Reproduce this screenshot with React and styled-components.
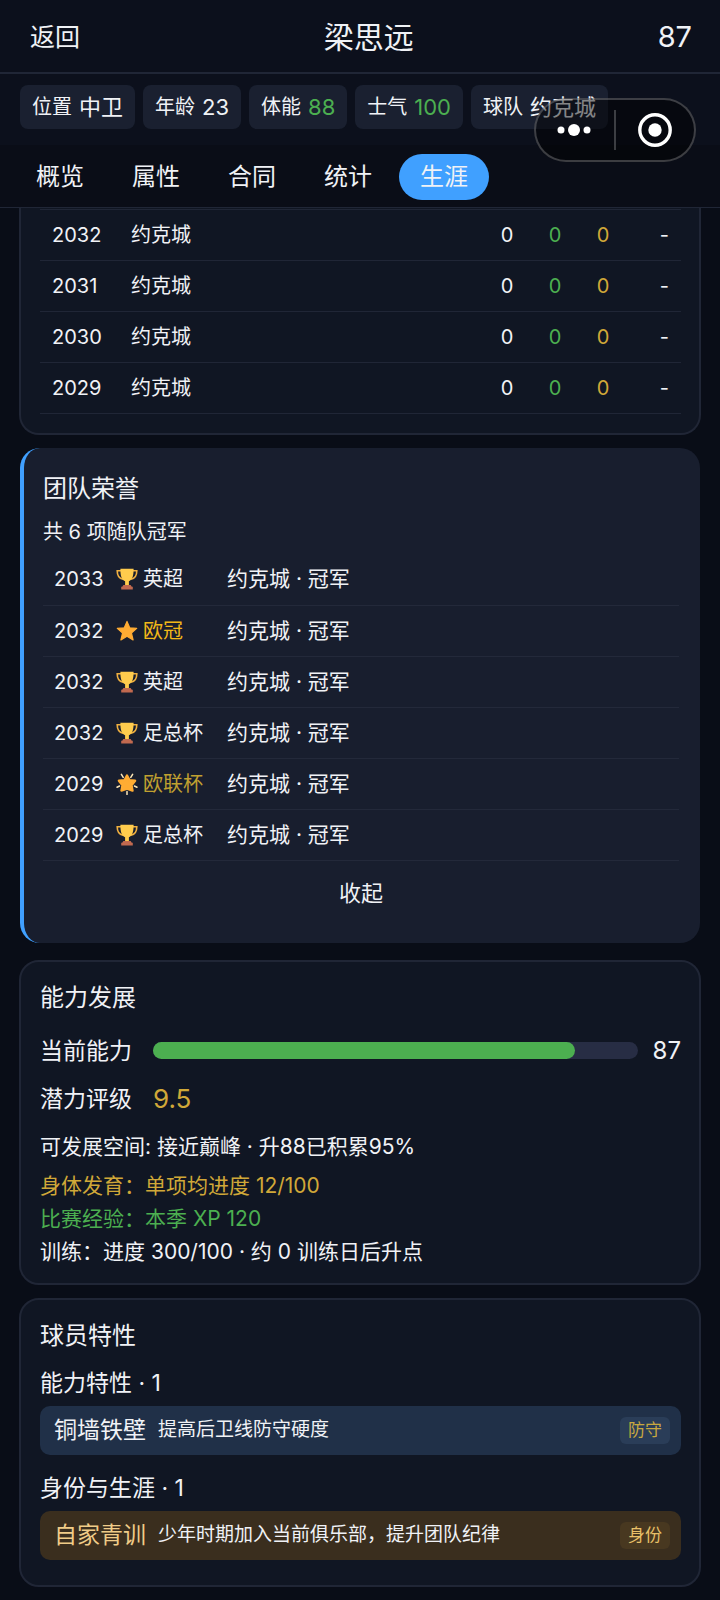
import React, { useState } from 'react';
import styled, { createGlobalStyle } from 'styled-components';

const colors = {
  page: '#090d17',
  header: '#0c101c',
  tabs: '#0a0d17',
  card: '#101623',
  honor: '#181e2e',
  chip: '#1a2030',
  line: '#202636',
  text: '#f0f2f6',
  blue: '#40a0ff',
  green: '#4caf50',
  gold: '#d0a838',
};

const chips = [
  { label: '位置', value: '中卫' },
  { label: '年龄', value: '23' },
  { label: '体能', value: '88', color: colors.green },
  { label: '士气', value: '100', color: colors.green },
  { label: '球队', value: '约克城' },
];

const tabs = ['概览', '属性', '合同', '统计', '生涯'];

const seasons = ['2032', '2031', '2030', '2029'];

const honors = [
  { year: '2033', icon: 'trophy', name: '英超' },
  { year: '2032', icon: 'star', name: '欧冠', color: '#f2b818' },
  { year: '2032', icon: 'trophy', name: '英超' },
  { year: '2032', icon: 'trophy', name: '足总杯' },
  { year: '2029', icon: 'glow', name: '欧联杯', color: '#c0a030' },
  { year: '2029', icon: 'trophy', name: '足总杯' },
];

const ability = 87;

export default function PlayerCareer () {
  const [tab, setTab] = useState('生涯');
  const [open, setOpen] = useState(true);

  return (
    <Page>
      <GlobalStyle/>
      <Header>
        <BackButton type="button">返回</BackButton>
        <PlayerName>梁思远</PlayerName>
        <Rating>{ability}</Rating>
      </Header>
      <Chips>
        {chips.map(c => (
          <Chip key={c.label}>
            {c.label} <ChipValue $color={c.color}>{c.value}</ChipValue>
          </Chip>
        ))}
      </Chips>
      <Tabs>
        {tabs.map(t => (
          <Tab key={t} type="button" $active={t === tab} onClick={() => setTab(t)}>{t}</Tab>
        ))}
      </Tabs>
      <Capsule>
        <CapsuleButton type="button" aria-label="更多">
          <svg width="36" height="14" viewBox="0 0 36 14" fill="#fff">
            <circle cx="4" cy="7" r="3.5"/>
            <circle cx="17" cy="7" r="6"/>
            <circle cx="30" cy="7" r="3.5"/>
          </svg>
        </CapsuleButton>
        <CapsuleDivider/>
        <CapsuleButton type="button" aria-label="关闭">
          <svg width="34" height="34" viewBox="0 0 34 34">
            <circle cx="17" cy="17" r="15.2" fill="none" stroke="#fff" strokeWidth="3.4"/>
            <circle cx="17" cy="17" r="6.7" fill="#fff"/>
          </svg>
        </CapsuleButton>
      </Capsule>

      <Body>
        <SeasonCard>
          <SeasonTable>
            <tbody>
              {seasons.map(year => (
                <tr key={year}>
                  <YearCell>{year}</YearCell>
                  <TeamCell>约克城</TeamCell>
                  <NumberCell>0</NumberCell>
                  <NumberCell $color={colors.green}>0</NumberCell>
                  <NumberCell $color={colors.gold}>0</NumberCell>
                  <ScoreCell>-</ScoreCell>
                </tr>
              ))}
            </tbody>
          </SeasonTable>
        </SeasonCard>

        <HonorCard>
          <Title>团队荣誉</Title>
          <Summary>共 6 项随队冠军</Summary>
          <HonorTable>
            <tbody>
              {(open ? honors : honors.slice(0, 3)).map((h, i) => (
                <tr key={i}>
                  <HonorYear>{h.year}</HonorYear>
                  <HonorName $color={h.color}>
                    <HonorLabel><HonorIcon type={h.icon}/>{h.name}</HonorLabel>
                  </HonorName>
                  <HonorDetail>约克城 · 冠军</HonorDetail>
                </tr>
              ))}
            </tbody>
          </HonorTable>
          <ToggleButton type="button" onClick={() => setOpen(!open)}>
            {open ? '收起' : '展开'}
          </ToggleButton>
        </HonorCard>

        <AbilityCard>
          <Title>能力发展</Title>
          <Stats>
            <StatRow>
              <StatLabel>当前能力</StatLabel>
              <Track><Fill style={{ width: `${ability}%` }}/></Track>
              <StatValue>{ability}</StatValue>
            </StatRow>
            <StatRow>
              <StatLabel>潜力评级</StatLabel>
              <Potential>9.5</Potential>
            </StatRow>
          </Stats>
          <Room>可发展空间: 接近巅峰 · 升88已积累95%</Room>
          <Note $color={colors.gold}>身体发育：单项均进度 12/100</Note>
          <Note $color={colors.green}>比赛经验：本季 XP 120</Note>
          <Note>训练：进度 300/100 · 约 0 训练日后升点</Note>
        </AbilityCard>

        <Card>
          <Title>球员特性</Title>
          <TraitGroup>
            <GroupTitle>能力特性 · 1</GroupTitle>
            <Trait>
              <TraitName>铜墙铁壁</TraitName>
              <TraitText>提高后卫线防守硬度</TraitText>
              <TraitTag>防守</TraitTag>
            </Trait>
          </TraitGroup>
          <TraitGroup>
            <GroupTitle>身份与生涯 · 1</GroupTitle>
            <Trait $gold>
              <TraitName $gold>自家青训</TraitName>
              <TraitText>少年时期加入当前俱乐部，提升团队纪律</TraitText>
              <TraitTag $gold>身份</TraitTag>
            </Trait>
          </TraitGroup>
        </Card>
      </Body>
    </Page>
  );
}

function HonorIcon ({ type }) {
  if (type === 'star') {
    return (
      <Icon viewBox="0 0 22 22">
        <path fill="#ffac33" stroke="#ffac33" strokeWidth="1.2" strokeLinejoin="round" d="M11 1.400l2.700 6.400 7 .6-5.300 4.600 1.700 6.900L11 16.200l-6.100 3.700 1.700-6.900-5.300-4.600 7-.6z"/>
      </Icon>
    );
  }
  if (type === 'glow') {
    return (
      <Icon viewBox="0 0 22 22">
        <path stroke="#ffe8b6" strokeWidth="1.5" strokeLinecap="round" d="M5.400 1.400l1.800 3M16.600 1.400l-1.800 3M1 14.200l2.600-1.200M21 14.200l-2.600-1.200M11 18.400v3"/>
        <path fill="#ffac33" stroke="#ffac33" strokeWidth="2.400" strokeLinejoin="round" d="M11 2.600l2.500 4.600 5.600.6-3.600 4.400 1 5.400L11 15.600l-5.500 2 1-5.400-3.600-4.400 5.600-.6z"/>
      </Icon>
    );
  }
  return (
    <Icon viewBox="0 0 22 22">
      <path fill="none" stroke="#f0b040" strokeWidth="1.6" d="M5.400 2.800H1.200c0 4.600 1 7.600 5.800 8.400M16.600 2.800h4.200c0 4.600-1 7.600-5.800 8.400"/>
      <path fill="#ffcc4d" d="M4.400.8h13.200c0 6.400-.8 10.800-4.700 12.400v4.200H9.100v-4.200C5.200 11.600 4.400 7.200 4.400.8z"/>
      <path fill="#c1694f" d="M7.400 17h7.200l1.200 1.800h1v2.800H5.200v-2.800h1z"/>
    </Icon>
  );
}

const GlobalStyle = createGlobalStyle`
  * {
    box-sizing: border-box;
  }
  body {
    margin: 0;
    background: ${colors.page};
  }
  body, button {
    font-family: Inter, "Noto Sans CJK SC", sans-serif;
    line-height: 32px;
    color: ${colors.text};
  }
  button {
    border: 0;
    padding: 0;
    background: none;
    cursor: pointer;
  }
`;

const Page = styled.div`
  position: relative;
  min-height: 100vh;
  font-size: 20px;
`;


/** HEADER **/

const Header = styled.header`
  display: flex;
  align-items: center;
  justify-content: space-between;
  height: 74px;
  padding: 2px 28px 0 30px;
  background: ${colors.header};
  border-bottom: 2px solid ${colors.line};
`;

const BackButton = styled.button`
  font-size: 25px;
`;

const PlayerName = styled.h1`
  margin: 0;
  font-size: 30px;
  font-weight: 400;
`;

const Rating = styled.span`
  font-size: 29px;
`;

const Chips = styled.div`
  display: flex;
  gap: 8px;
  padding: 11px 20px 16px;
  background: ${colors.header};
`;

const Chip = styled.span`
  display: flex;
  align-items: center;
  gap: 7px;
  height: 44px;
  padding: 0 12px;
  border-radius: 8px;
  background: ${colors.chip};
  white-space: nowrap;
`;

const ChipValue = styled.span`
  font-size: 22px;
  color: ${props => props.$color || colors.text};
`;

const Tabs = styled.nav`
  display: flex;
  gap: 6px;
  padding: 9px 15px 7px;
  background: ${colors.tabs};
  border-bottom: 1px solid ${colors.line};
`;

const Tab = styled.button`
  height: 46px;
  padding: 0 21px;
  border-radius: 23px;
  font-size: 24px;
  background: ${props => props.$active ? colors.blue : 'transparent'};
`;

const Capsule = styled.div`
  position: absolute;
  top: 98px;
  right: 24px;
  display: flex;
  align-items: center;
  width: 162px;
  height: 64px;
  border: 2px solid rgba(255, 255, 255, 0.22);
  border-radius: 32px;
  background: rgba(0, 0, 0, 0.45);
`;

const CapsuleButton = styled.button`
  flex: 1;
  display: flex;
  align-items: center;
  justify-content: center;
  height: 100%;
`;

const CapsuleDivider = styled.span`
  width: 2px;
  height: 40px;
  background: rgba(255, 255, 255, 0.22);
`;


/** CARDS **/

const Body = styled.main`
  padding: 0 19px 14px;
`;

const Card = styled.section`
  margin-bottom: 13px;
  padding: 19px 18px 25px 19px;
  background: ${colors.card};
  border: 2px solid ${colors.line};
  border-radius: 20px;
`;

const SeasonCard = styled(Card)`
  padding-top: 1px;
  padding-bottom: 19px;
  border-top: 0;
  border-radius: 0 0 20px 20px;
`;

const HonorCard = styled(Card)`
  margin: 0 1px 17px;
  padding: 24px 21px 26px 19px;
  background: ${colors.honor};
  border: 0;
  border-left: 4px solid ${colors.blue};
`;

const AbilityCard = styled(Card)`
  padding-bottom: 15px;
`;

const Title = styled.h2`
  margin: 0;
  font-size: 24px;
  line-height: 34px;
  font-weight: 400;
`;

const Summary = styled.p`
  margin: 10px 0 6px;
`;


/** TABLES **/

const Table = styled.table`
  width: 100%;
  border-collapse: collapse;
  table-layout: fixed;

  td {
    height: 51px;
    padding: 0;
    border-bottom: 1px solid ${colors.line};
  }
`;

const SeasonTable = styled(Table)`
  border-top: 1px solid ${colors.line};
`;

const HonorTable = styled(Table)`
  td {
    border-color: #23293a;
  }
`;

const YearCell = styled.td`
  width: 91px;
  && {
    padding-left: 12px;
  }
`;

const TeamCell = styled.td``;

const NumberCell = styled.td`
  width: 48px;
  text-align: center;
  color: ${props => props.$color || colors.text};
`;

const ScoreCell = styled.td`
  width: 54px;
  text-align: right;
  && {
    padding-right: 12px;
  }
`;

const HonorYear = styled.td`
  width: 73px;
  && {
    padding-left: 11px;
  }
`;

const HonorName = styled.td`
  width: 111px;
  color: ${props => props.$color || colors.text};
`;

const HonorDetail = styled.td`
  font-size: 21px;
`;

const HonorLabel = styled.span`
  display: flex;
  align-items: center;
  gap: 5px;
`;

const Icon = styled.svg`
  width: 22px;
  height: 22px;
`;

const ToggleButton = styled.button`
  display: block;
  width: 100%;
  height: 48px;
  margin-top: 8px;
  font-size: 22px;
`;


/** ABILITY **/

const Stats = styled.div`
  margin-top: 12px;
`;

const StatRow = styled.div`
  display: flex;
  align-items: center;
  height: 48px;
`;

const StatLabel = styled.span`
  width: 113px;
  font-size: 23px;
`;

const Track = styled.div`
  flex: 1;
  height: 17px;
  border-radius: 9px;
  background: #272d44;
`;

const Fill = styled.div`
  height: 100%;
  border-radius: 9px;
  background: ${colors.green};
`;

const StatValue = styled.span`
  width: 43px;
  font-size: 24px;
  text-align: right;
`;

const Potential = styled.span`
  font-size: 26px;
  color: ${colors.gold};
`;

const Note = styled.p`
  margin: 0;
  font-size: 21px;
  line-height: 33px;
  color: ${props => props.$color || colors.text};
`;

const Room = styled(Note)`
  margin: 7px 0 6px;
`;


/** TRAITS **/

const TraitGroup = styled.div`
  margin-top: 13px;

  & + & {
    margin-top: 16px;
  }
`;

const GroupTitle = styled.h3`
  margin: 0 0 6px;
  font-size: 23px;
  line-height: 34px;
  font-weight: 400;
`;

const Trait = styled.div`
  display: flex;
  align-items: center;
  gap: 12px;
  height: 49px;
  padding: 0 11px 0 14px;
  border-radius: 10px;
  background: ${props => props.$gold ? '#3a2e1e' : '#203048'};
`;

const TraitName = styled.span`
  font-size: 23px;
  color: ${props => props.$gold ? '#f0cc88' : colors.text};
`;

const TraitText = styled.span`
  flex: 1;
  font-size: 19px;
`;

const TraitTag = styled.span`
  padding: 0 8px;
  border-radius: 6px;
  font-size: 17px;
  line-height: 27px;
  color: ${props => props.$gold ? '#e8c068' : '#c8a840'};
  background: ${props => props.$gold ? '#483820' : '#2a3d58'};
`;
